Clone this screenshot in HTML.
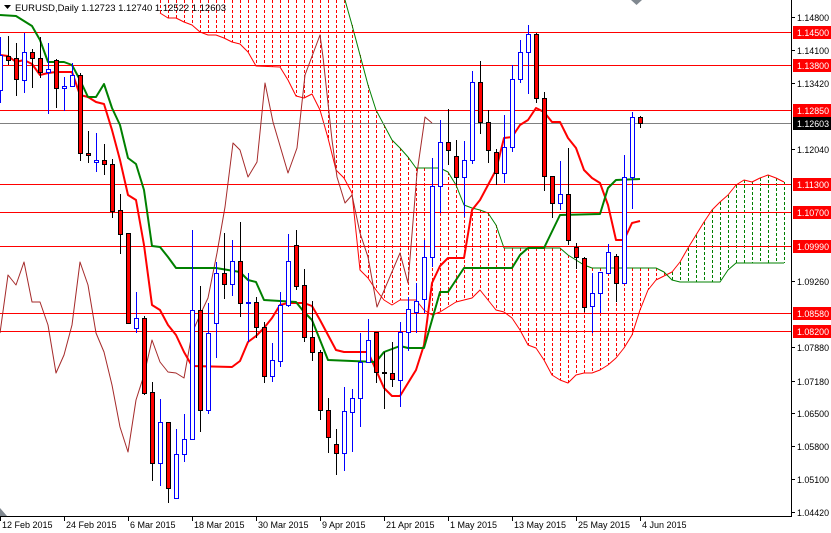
<!DOCTYPE html>
<html><head><meta charset="utf-8">
<style>
html,body{margin:0;padding:0;background:#fff;width:831px;height:533px;overflow:hidden}
svg{display:block}
text{font-family:"Liberation Sans","DejaVu Sans",sans-serif;font-size:9px}
</style></head>
<body>
<svg id="s" width="831" height="533" xmlns="http://www.w3.org/2000/svg"></svg>
<script>
var s=document.getElementById('s');var NS='http://www.w3.org/2000/svg';
function el(t,a,txt){var e=document.createElementNS(NS,t);for(var k in a)e.setAttribute(k,a[k]);if(txt!==undefined)e.textContent=txt;s.appendChild(e);return e;}
function pl(pts,c,w){el('polyline',{points:pts.map(function(p){return p[0]+','+p[1]}).join(' '),fill:'none',stroke:c,'stroke-width':w,'stroke-linejoin':'round'});}
function interp(arr,x){for(var i=0;i<arr.length-1;i++){if(x>=arr[i][0]&&x<=arr[i+1][0]){var t=(x-arr[i][0])/(arr[i+1][0]-arr[i][0]||1);return arr[i][1]+t*(arr[i+1][1]-arr[i][1]);}}return null;}
var B=[[160,-10],[340,-10],[345,0],[352,25],[360,55],[368,85],[376,110],[384,125],[392,140],[400,148],[408,157],[416,168],[440,168],[448,172],[456,185],[464,205],[472,208],[480,210],[488,213],[496,225],[504,248],[560,248],[568,255],[576,260],[584,265],[592,268],[656,268],[664,272],[672,280],[680,282],[720,282],[728,270],[736,263],[784,263]];
var A=[[160,13],[168,18],[176,18],[184,22],[192,25],[200,32],[208,35],[216,35],[224,38],[232,42],[240,44],[248,52],[256,66],[280,67],[288,80],[296,96],[304,98],[312,94],[320,110],[328,138],[336,170],[344,178],[352,193],[360,270],[368,278],[376,290],[384,300],[392,305],[400,300],[408,300],[416,300],[424,310],[432,315],[440,312],[448,307],[456,302],[464,300],[472,298],[480,290],[488,300],[496,310],[504,312],[512,318],[520,330],[528,345],[536,348],[544,360],[552,375],[560,380],[568,383],[576,375],[584,373],[592,373],[600,370],[608,365],[616,358],[624,348],[632,335],[640,310],[648,290],[656,280],[664,276],[672,272],[680,262],[688,248],[696,235],[704,222],[712,210],[720,202],[728,195],[736,185],[744,180],[752,182],[760,178],[768,175],[776,178],[784,182]];
for(var x=160;x<=784;x+=8){var a=interp(A,x),b=interp(B,x);var t=Math.max(0,Math.min(a,b)),bo=Math.max(a,b);var c=x>=672?'#008000':'#ff0000';el('line',{x1:x+.5,y1:t,x2:x+.5,y2:bo,stroke:c,'stroke-width':1,'stroke-dasharray':'3,2'});}
pl(A.filter(function(p){return p[0]<672}),'#ff0000',1);
pl(A.filter(function(p){return p[0]>=664}),'#ff0000',1);
pl(B.filter(function(p){return p[1]>=0}),'#008000',1);
[32,65,110,184,212,246,313,331].forEach(function(y){el('line',{x1:0,y1:y+.5,x2:791,y2:y+.5,stroke:'#ff0000','stroke-width':1});});
el('line',{x1:0,y1:123.5,x2:791,y2:123.5,stroke:'#808080','stroke-width':1});
pl([[0,333],[8,275],[16,285],[24,262],[32,302],[40,302],[48,325],[56,373],[64,355],[72,325],[80,262],[88,285],[96,333],[104,352],[112,385],[120,427],[128,452],[136,400],[144,375],[152,340],[160,362],[168,372],[176,373],[184,378],[192,333],[200,315],[208,298],[217,253],[225,207],[233,143],[240,150],[248,177],[257,162],[265,83],[273,122],[288,173],[297,148],[305,75],[320,35],[323,57],[332,140],[337,177],[345,203],[352,195],[360,233],[368,257],[377,307],[400,253],[408,283],[417,173],[425,117],[432,123]],'#a52a2a',1);
pl([[0,55],[8,56],[16,62],[24,60],[32,64],[40,75],[48,73],[56,72],[72,72],[80,95],[88,97],[96,102],[104,104],[112,130],[120,160],[128,195],[136,200],[144,245],[152,305],[160,310],[168,325],[176,335],[184,352],[192,366],[232,367],[240,361],[248,342],[256,336],[264,328],[272,318],[280,305],[288,303],[304,303],[312,306],[320,320],[328,335],[336,350],[344,352],[368,352],[376,370],[384,388],[392,396],[400,396],[408,383],[416,370],[424,345],[432,283],[440,266],[448,258],[464,258],[472,210],[480,200],[488,185],[496,170],[504,138],[512,137],[520,125],[528,120],[536,108],[544,112],[552,122],[560,122],[568,138],[576,148],[584,170],[592,178],[600,183],[608,205],[616,240],[624,240],[632,223],[640,221]],'#ff0000',2);
pl([[0,15],[16,16],[32,26],[40,40],[48,62],[64,62],[72,65],[80,80],[88,97],[96,97],[104,84],[112,108],[120,125],[128,158],[136,164],[144,190],[152,246],[160,247],[168,257],[176,268],[216,268],[240,272],[248,280],[256,282],[264,300],[296,302],[304,312],[312,320],[320,340],[328,360],[376,362],[384,352],[392,349],[400,346],[408,348],[424,348],[432,320],[440,292],[448,292],[464,268],[512,268],[520,255],[528,248],[544,248],[560,215],[600,214],[608,188],[616,180],[640,179]],'#008000',2);
var C=[[0,55,90,37,103,1],[1,56,60,36,65,0],[2,58,79,43,96,0],[3,52,80,33,93,1],[4,52,58,49,88,0],[5,58,72,37,78,0],[6,69,72,43,114,1],[7,60,88,59,108,0],[8,86,88,77,111,1],[9,75,86,63,87,1],[10,75,153,73,161,0],[11,153,155,131,163,0],[12,160,162,133,172,1],[13,160,164,144,175,0],[14,164,211,159,218,0],[15,210,234,194,254,0],[16,233,323,233,323,0],[17,318,328,292,333,1],[18,318,393,316,395,0],[19,392,463,382,481,0],[20,422,463,399,486,1],[21,422,488,422,503,0],[22,454,498,429,499,1],[23,439,454,414,462,1],[24,310,439,230,439,1],[25,310,410,286,432,0],[26,333,410,303,414,1],[27,273,323,262,358,1],[28,273,284,233,299,0],[29,261,284,240,296,1],[30,261,303,222,317,0],[31,302,303,273,342,1],[32,302,327,297,338,0],[33,327,376,322,383,0],[34,360,376,343,382,1],[35,305,361,292,367,1],[36,261,305,234,307,1],[37,245,286,230,290,0],[38,285,337,269,342,0],[39,337,352,301,361,0],[40,352,410,350,420,0],[41,410,437,398,453,0],[42,444,453,429,475,0],[43,411,453,387,471,1],[44,398,412,389,452,1],[45,362,398,333,427,1],[46,340,362,319,363,1],[47,332,372,332,383,0],[48,372,373,352,409,0],[49,373,379,342,387,0],[50,332,380,322,407,1],[51,309,332,297,351,1],[52,301,312,283,333,1],[53,257,299,240,313,1],[54,186,257,158,267,1],[55,142,186,120,213,1],[56,142,150,109,165,0],[57,156,177,140,185,0],[58,160,177,141,217,1],[59,82,160,71,164,1],[60,82,122,61,134,0],[61,122,150,110,163,0],[62,152,173,149,185,0],[63,147,173,115,183,1],[64,79,147,65,152,1],[65,52,79,40,83,1],[66,34,52,25,94,1],[67,34,98,33,103,0],[68,98,176,92,191,0],[69,176,203,176,218,0],[70,194,203,161,210,1],[71,194,240,148,245,0],[72,247,257,243,269,0],[73,258,307,257,312,0],[74,293,306,273,333,1],[75,272,293,272,313,1],[76,252,273,244,274,1],[77,256,283,254,302,0],[78,177,283,155,283,1],[79,117,177,112,209,1],[80,117,123,116,128,0]];
C.forEach(function(c){var x=c[0]*8;var col=c[5]?'#0000ff':'#000000';
el('line',{x1:x+.5,y1:c[3],x2:x+.5,y2:c[4],stroke:col,'stroke-width':1});
var h=Math.max(1,c[2]-c[1]);
el('rect',{x:x-1.5,y:c[1]+.5,width:4,height:h,fill:c[5]?'#ffffff':'#ff0000',stroke:col,'stroke-width':1});});
el('rect',{x:792,y:0,width:39,height:533,fill:'#fff'});
el('rect',{x:0,y:517,width:831,height:16,fill:'#fff'});
el('line',{x1:791.5,y1:0,x2:791.5,y2:517,stroke:'#000','stroke-width':1});
el('line',{x1:0,y1:516.5,x2:792,y2:516.5,stroke:'#000','stroke-width':1});
[[17,'1.14800'],[50,'1.14100'],[83,'1.13420'],[149,'1.12040'],[281,'1.09260'],[347,'1.07880'],[381,'1.07180'],[413,'1.06500'],[446,'1.05800'],[479,'1.05100'],[512,'1.04420']].forEach(function(p){el('line',{x1:791,y1:p[0]+.5,x2:795,y2:p[0]+.5,stroke:'#000'});el('text',{x:797,y:p[0]+4,fill:'#000',textLength:32,lengthAdjust:'spacingAndGlyphs'},p[1]);});
[[32,'1.14500'],[65,'1.13800'],[110,'1.12850'],[184,'1.11300'],[212,'1.10700'],[246,'1.09990'],[313,'1.08580'],[331,'1.08200']].forEach(function(p){el('rect',{x:793,y:p[0]-6,width:38,height:13,fill:'#ff0000'});el('text',{x:797,y:p[0]+4,fill:'#fff',textLength:32,lengthAdjust:'spacingAndGlyphs'},p[1]);});
el('rect',{x:793,y:117,width:38,height:13,fill:'#000'});el('text',{x:797,y:127,fill:'#fff',textLength:32,lengthAdjust:'spacingAndGlyphs'},'1.12603');
[[0,'12 Feb 2015'],[64,'24 Feb 2015'],[128,'6 Mar 2015'],[192,'18 Mar 2015'],[256,'30 Mar 2015'],[320,'9 Apr 2015'],[384,'21 Apr 2015'],[448,'1 May 2015'],[512,'13 May 2015'],[576,'25 May 2015'],[640,'4 Jun 2015']].forEach(function(p){el('line',{x1:p[0]+.5,y1:516,x2:p[0]+.5,y2:521,stroke:'#000'});el('text',{x:p[0]+2,y:528,fill:'#000'},p[1]);});
el('polygon',{points:'4,5 11,5 7.5,9',fill:'#000'});
el('text',{x:15,y:11,fill:'#000','font-size':'9.5px',textLength:211,lengthAdjust:'spacingAndGlyphs'},'EURUSD,Daily  1.12723 1.12740 1.12522 1.12603');
el('polygon',{points:'631,0 642,0 636.5,5',fill:'#808890'});
el('polygon',{points:'0,508 0,516 7,516',fill:'#808890'});
</script>
</body></html>
